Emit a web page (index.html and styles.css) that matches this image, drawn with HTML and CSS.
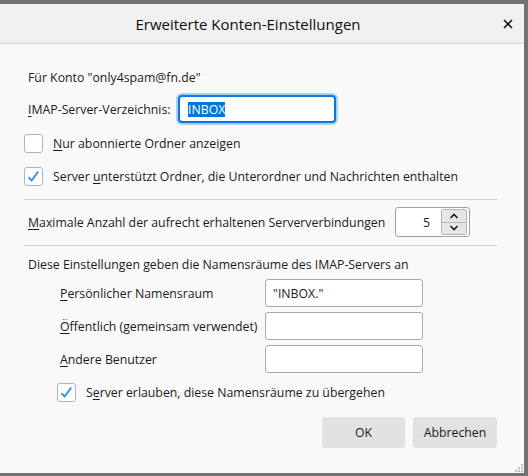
FILE: index.html
```html
<!DOCTYPE html>
<html lang="de">
<head>
<meta charset="utf-8">
<title>Erweiterte Konten-Einstellungen</title>
<link rel="stylesheet" href="styles.css">
</head>
<body>
<div class="frame">
  <div class="dialog">
    <header class="titlebar">
      <span class="title">Erweiterte Konten-Einstellungen</span>
      <span class="close">
        <svg width="10" height="10" viewBox="0 0 10 10"><path d="M1 1L9 9M9 1L1 9" stroke="#1b1b1b" stroke-width="1.6" fill="none"/></svg>
      </span>
    </header>
    <main class="content">
      <div class="text-row">Für Konto "only4spam@fn.de"</div>

      <div class="imap-row">
        <span class="imap-label"><u>I</u>MAP-Server-Verzeichnis:</span>
        <div class="field focused"><span class="sel">INBOX</span></div>
      </div>

      <div class="check-row cr1">
        <span class="cb"></span>
        <span class="cb-label"><u>N</u>ur abonnierte Ordner anzeigen</span>
      </div>

      <div class="check-row cr2">
        <span class="cb">
          <svg width="17" height="17" viewBox="0 0 17 17"><path d="M3.5 9.2L6.6 12.6L13.2 3.6" stroke="#2f8de4" stroke-width="1.8" fill="none" stroke-linejoin="miter"/></svg>
        </span>
        <span class="cb-label">Server <u>u</u>nterstützt Ordner, die Unterordner und Nachrichten enthalten</span>
      </div>

      <div class="sep sep1"></div>

      <div class="max-row">
        <span class="max-label"><u>M</u>aximale Anzahl der aufrecht erhaltenen Serververbindungen</span>
        <div class="spin">
          <span class="spin-value">5</span>
          <div class="spin-btns">
            <span class="spin-btn up">
              <svg width="10" height="6" viewBox="0 0 10 6"><path d="M1.5 5L5 1.5L8.5 5" stroke="#1b1b1b" stroke-width="1.6" fill="none"/></svg>
            </span>
            <span class="spin-btn down">
              <svg width="10" height="6" viewBox="0 0 10 6"><path d="M1.5 1L5 4.5L8.5 1" stroke="#1b1b1b" stroke-width="1.6" fill="none"/></svg>
            </span>
          </div>
        </div>
      </div>

      <div class="sep sep2"></div>

      <div class="text-row ns-intro">Diese Einstellungen geben die Namensräume des IMAP-Servers an</div>

      <div class="ns-grid">
        <span class="ns-label"><u>P</u>ersönlicher Namensraum</span>
        <div class="field">"INBOX."</div>
        <span class="ns-label"><u>Ö</u>ffentlich (gemeinsam verwendet)</span>
        <div class="field"></div>
        <span class="ns-label"><u>A</u>ndere Benutzer</span>
        <div class="field"></div>
      </div>

      <div class="check-row cr3">
        <span class="cb">
          <svg width="17" height="17" viewBox="0 0 17 17"><path d="M3.5 9.2L6.6 12.6L13.2 3.6" stroke="#2f8de4" stroke-width="1.8" fill="none" stroke-linejoin="miter"/></svg>
        </span>
        <span class="cb-label">S<u>e</u>rver erlauben, diese Namensräume zu übergehen</span>
      </div>

      <div class="buttons">
        <button class="btn">OK</button>
        <button class="btn">Abbrechen</button>
      </div>
    </main>
    <svg class="grip" width="9" height="9" viewBox="0 0 9 9">
      <rect x="7" y="1" width="2" height="2" fill="#bdbdbd"/>
      <rect x="4" y="4" width="2" height="2" fill="#bdbdbd"/>
      <rect x="7" y="4" width="2" height="2" fill="#bdbdbd"/>
      <rect x="1" y="7" width="2" height="2" fill="#bdbdbd"/>
      <rect x="4" y="7" width="2" height="2" fill="#bdbdbd"/>
      <rect x="7" y="7" width="2" height="2" fill="#bdbdbd"/>
    </svg>
  </div>
</div>
</body>
</html>
```

FILE: styles.css
```css
* { box-sizing: border-box; }
html, body { margin: 0; padding: 0; }
body {
  width: 528px;
  height: 476px;
  overflow: hidden;
  background: #727272;
  font-family: "Open Sans", "Noto Sans", sans-serif;
  font-size: 12.3px;
  color: #1b1b1b;
}
u { text-decoration-thickness: 1px; text-underline-offset: 2px; }

.frame { padding: 4px 4px 3px 0; height: 476px; }
.dialog {
  position: relative;
  height: 469px;
  background: #f9f9f9;
  display: flex;
  flex-direction: column;
}

.titlebar {
  flex: none;
  height: 40px;
  background: #f0f0f0;
  border-bottom: 1px solid #d4d4d4;
  display: flex;
  align-items: center;
  padding-right: 4px;
}
.title { flex: 1; text-align: center; font-size: 15px; color: #0f0f0f; }
.close { width: 24px; display: flex; justify-content: center; align-items: center; }

.content {
  flex: 1;
  padding: 24px 27px 0 24px;
  display: flex;
  flex-direction: column;
}

.text-row { height: 20px; line-height: 20px; padding-left: 4px; }

.imap-row { margin-top: 5px; height: 32px; display: flex; align-items: center; }
.imap-label { width: 154px; padding-left: 4px; }

.field {
  width: 158px;
  height: 28px;
  background: #fff;
  border: 1px solid #a9a9a9;
  border-radius: 3px;
  padding-left: 7px;
  display: flex;
  align-items: center;
}
.field.focused {
  border: 2px solid #0a78e0;
  box-shadow: 0 0 0 2px #a9d0f5;
  border-radius: 4px;
  padding-left: 8px;
}
.sel { background: #0078d7; color: #fff; line-height: 15px; }

.check-row { display: flex; align-items: center; height: 20px; }
.cr1 { margin-top: 8px; }
.cr2 { margin-top: 13px; }
.cb {
  width: 19px;
  height: 19px;
  flex: none;
  background: #fff;
  border: 1px solid #b3b3b3;
  border-radius: 3px;
  display: flex;
  align-items: center;
  justify-content: center;
}
.cb-label { margin-left: 10px; }

.sep { height: 1px; background: #d2d2d2; }
.sep1 { margin-top: 13px; }
.sep2 { margin-top: 8px; }

.max-row { margin-top: 7px; height: 30px; display: flex; align-items: center; }
.max-label { width: 371px; padding-left: 4px; }
.spin {
  width: 75px;
  height: 30px;
  background: #fff;
  border: 1px solid #a0a0a0;
  border-radius: 3px;
  display: flex;
  align-items: center;
  padding: 1px;
}
.spin-value { flex: 1; text-align: right; padding-right: 11px; }
.spin-btns {
  width: 26px;
  height: 26px;
  display: flex;
  flex-direction: column;
  border: 1px solid #b4b4b4;
  border-radius: 2px;
  margin-right: 1px;
}
.spin-btn {
  flex: 1;
  background: #e6e6e6;
  display: flex;
  align-items: center;
  justify-content: center;
}
.spin-btn.up { border-bottom: 1px solid #b4b4b4; }

.ns-intro { margin-top: 9px; }
.ns-grid {
  margin-top: 4px;
  padding-left: 36px;
  display: grid;
  grid-template-columns: 205px 158px;
  grid-auto-rows: 28px;
  row-gap: 5px;
  align-items: center;
}

.cr3 { margin-top: 9px; padding-left: 33px; }

.buttons { margin-top: 15px; display: flex; justify-content: flex-end; gap: 8px; }
.btn {
  width: 83px;
  height: 31px;
  border: none;
  border-radius: 3px;
  background: #e2e2e2;
  font: inherit;
  color: #1b1b1b;
  padding: 0;
}
.btn + .btn { width: 84px; }

.grip { position: absolute; right: 1px; bottom: 1px; }
```
